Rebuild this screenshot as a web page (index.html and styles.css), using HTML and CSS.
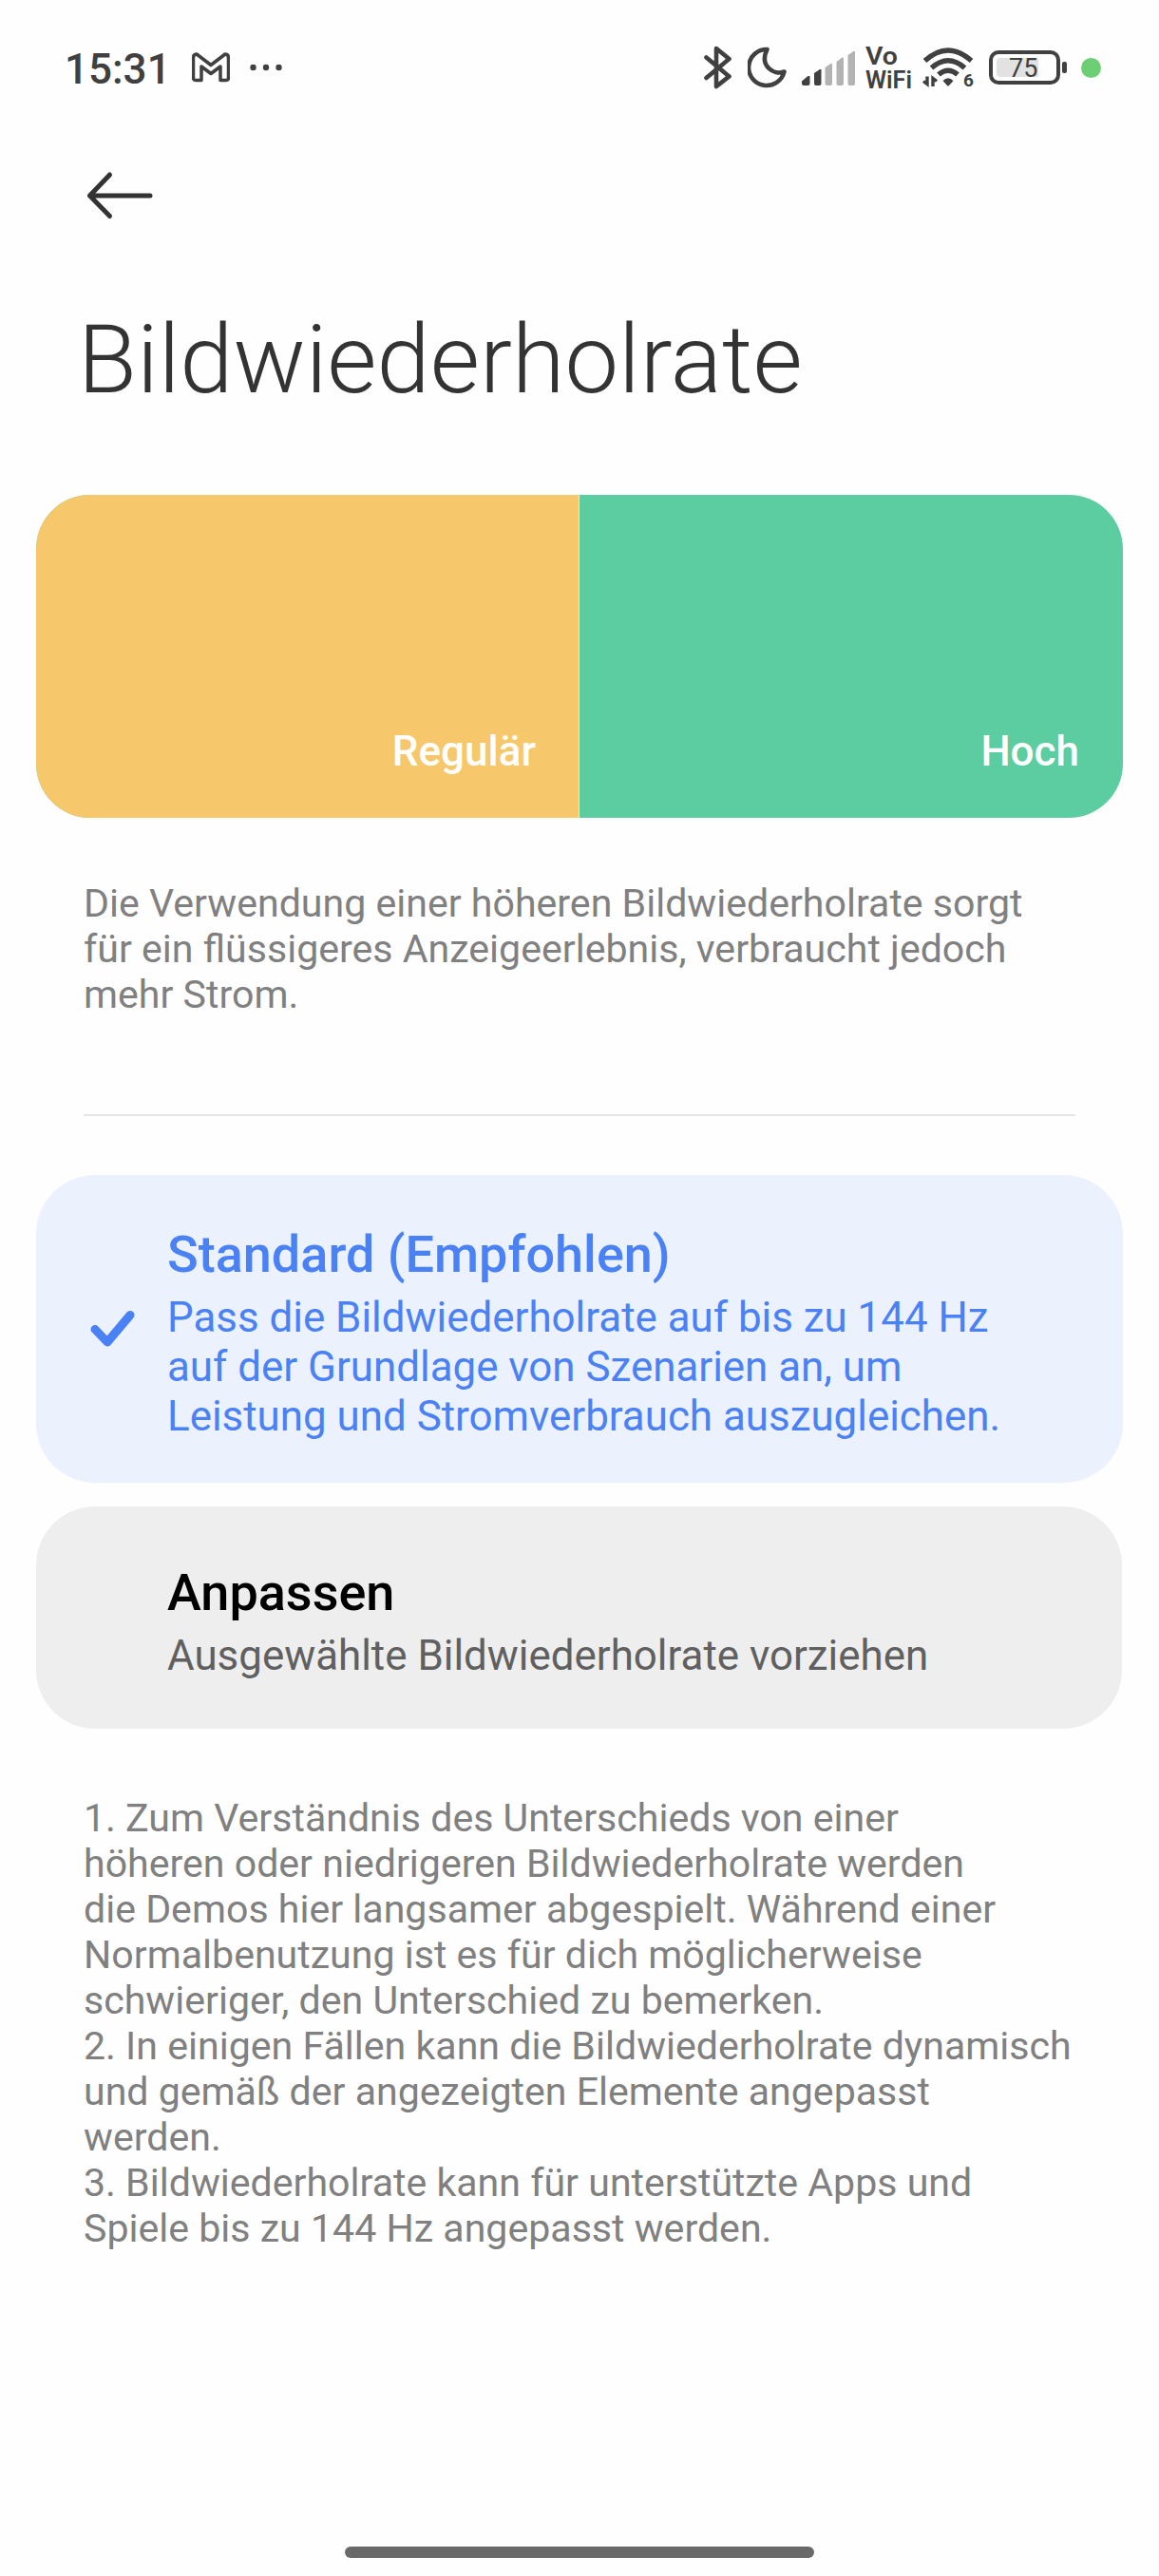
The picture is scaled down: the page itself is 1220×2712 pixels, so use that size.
FILE: index.html
```html
<!DOCTYPE html>
<html lang="de">
<head>
<meta charset="utf-8">
<title>Bildwiederholrate</title>
<link rel="stylesheet" href="styles.css">
</head>
<body>

<div class="statusbar">
  <span class="time">15:31</span>
  <svg class="ic-mail" width="40" height="32" viewBox="0 0 40 32">
    <path d="M5 2 L20 13.500 L35 2 Q38.500 2 38.500 6 V27 Q38.500 29.500 36 29.500 H30 V15 L20 22.500 L10 15 V29.500 H4 Q1.500 29.500 1.500 27 V6 Q1.500 2 5 2 Z"/>
  </svg>
  <svg class="ic-dots" width="34" height="8" viewBox="0 0 34 8">
    <circle cx="3.500" cy="4" r="3.200"/><circle cx="17" cy="4" r="3.200"/><circle cx="30.500" cy="4" r="3.200"/>
  </svg>

  <svg class="ic-bt" width="30" height="46" viewBox="0 0 30 46">
    <path d="M2.500 12.500 L26.500 32.500 L13 43 V3 L26.500 14 L2.500 34"/>
  </svg>
  <svg class="ic-moon" width="42" height="44" viewBox="0 0 42 44">
    <path d="M20.500 3 A19 19 0 1 0 38.500 26.500 C27 30.500 12 20 20.500 3 Z"/>
  </svg>
  <svg class="ic-signal" width="57" height="38" viewBox="0 0 57 38">
    <path class="on" d="M0 35 V32.500 L6.500 27 H8.500 V35 Q8.500 37 6.500 37 H2 Q0 37 0 35 Z"/>
    <path class="on" d="M13 35 V24 L19 20 H20.500 V35 Q20.500 37 18.500 37 H15 Q13 37 13 35 Z"/>
    <path class="off" d="M24.500 35 V18 L30.500 14 H32 V35 Q32 37 30 37 H26.500 Q24.500 37 24.500 35 Z"/>
    <path class="off" d="M36.500 35 V12 L42.500 7.500 H44 V35 Q44 37 42 37 H38.500 Q36.500 37 36.500 35 Z"/>
    <path class="off" d="M48.500 35 V5 L54.500 1 H56 V35 Q56 37 54 37 H50.500 Q48.500 37 48.500 35 Z"/>
  </svg>
  <svg class="ic-vowifi" width="50" height="60" viewBox="0 0 50 60">
    <text x="0" y="27" textLength="34" lengthAdjust="spacingAndGlyphs">Vo</text>
    <text x="0" y="52" textLength="49" lengthAdjust="spacingAndGlyphs">WiFi</text>
  </svg>
  <svg class="ic-wifi" width="58" height="52" viewBox="0 -4 58 52">
    <path class="arc" d="M2.500 15 Q27 -7 51.500 15"/>
    <path class="arc" d="M9.500 22.500 Q27 7 44.500 22.500"/>
    <path class="arc" d="M17 29.500 Q27 21 37 29.500"/>
    <path class="fill" d="M21.500 36 Q27 30.500 32.500 36 L28 41 Q27 42 26 41 Z"/>
    <path class="arr" d="M1 36.500 L5 39.500 V31.500 M11 42 V33.500 L15 36.500"/>
    <text x="43" y="42">6</text>
  </svg>
  <div class="battery">
    <span class="level">75</span>
  </div>
  <span class="nub"></span>
  <span class="privacy-dot"></span>
</div>

<div class="actionbar">
  <svg width="72" height="52" viewBox="0 0 72 52">
    <path d="M25.500 4 L4.500 26 L25.500 47.500 M4.500 26 H68"/>
  </svg>
</div>

<h1>Bildwiederholrate</h1>

<div class="demo">
  <div class="demo-item regular">Regulär</div>
  <div class="demo-item high">Hoch</div>
</div>

<p class="hint intro">Die Verwendung einer höheren Bildwiederholrate sorgt<br>
für ein flüssigeres Anzeigeerlebnis, verbraucht jedoch<br>
mehr Strom.</p>

<hr>

<div class="option selected">
  <svg class="check" width="48" height="40" viewBox="0 0 48 40">
    <path d="M5 20.500 L18 34 L42 5.500"/>
  </svg>
  <div class="option-text">
    <h2>Standard (Empfohlen)</h2>
    <p>Pass die Bildwiederholrate auf bis zu 144 Hz<br>
    auf der Grundlage von Szenarien an, um<br>
    Leistung und Stromverbrauch auszugleichen.</p>
  </div>
</div>

<div class="option custom">
  <div class="option-text">
    <h2>Anpassen</h2>
    <p>Ausgewählte Bildwiederholrate vorziehen</p>
  </div>
</div>

<p class="hint notes">1. Zum Verständnis des Unterschieds von einer<br>
höheren oder niedrigeren Bildwiederholrate werden<br>
die Demos hier langsamer abgespielt. Während einer<br>
Normalbenutzung ist es für dich möglicherweise<br>
schwieriger, den Unterschied zu bemerken.<br>
2. In einigen Fällen kann die Bildwiederholrate dynamisch<br>
und gemäß der angezeigten Elemente angepasst<br>
werden.<br>
3. Bildwiederholrate kann für unterstützte Apps und<br>
Spiele bis zu 144 Hz angepasst werden.</p>

<div class="home-indicator"></div>

</body>
</html>
```

FILE: styles.css
```css
* {
  box-sizing: border-box;
}

body {
  margin: 0;
  height: 2712px;
  display: flex;
  flex-direction: column;
  background: #fefefe;
  font-family: Roboto, sans-serif;
}

h1, h2, p {
  margin: 0;
}

svg {
  flex: none;
  fill: none;
}

/* status bar */
.statusbar {
  display: flex;
  align-items: center;
  height: 142px;
  padding-left: 68px;
  color: #404040;
}

.time {
  width: 134px;
  font-size: 44px;
  font-weight: 500;
  line-height: 52px;
  margin-top: 3px;
}

.ic-mail {
  stroke: #404040;
  stroke-width: 3.5;
  stroke-linejoin: round;
}

.ic-dots {
  margin-left: 21px;
  margin-right: auto;
  fill: #404040;
}

.ic-bt, .ic-moon {
  stroke: #404040;
  stroke-width: 4.6;
  stroke-linecap: round;
  stroke-linejoin: round;
}

.ic-moon {
  margin-left: 16px;
}

.ic-signal {
  margin: 1px 10px 0 15px;
}

.on {
  fill: #404040;
}

.off {
  fill: #b3b3b3;
}

.ic-vowifi {
  overflow: visible;
}

.ic-vowifi text {
  fill: #404040;
  font-size: 26px;
  font-weight: 600;
}

.ic-wifi {
  margin: 0 12px 0 10px;
  overflow: visible;
}

.arc {
  stroke: #404040;
  stroke-width: 5.5;
}

.fill {
  fill: #404040;
}

.arr {
  stroke: #404040;
  stroke-width: 3.4;
}

.ic-wifi text {
  fill: #404040;
  font-size: 19px;
  font-weight: 700;
}

.battery {
  width: 75px;
  height: 36px;
  padding: 4px;
  border: 4px solid #404040;
  border-radius: 10px;
}

.level {
  display: block;
  width: 44px;
  height: 20px;
  padding-left: 13px;
  border-radius: 4px 0 0 4px;
  background: #e2e2e2;
  font-size: 27px;
  font-weight: 400;
  line-height: 22px;
}

.nub {
  width: 5px;
  height: 12px;
  margin-left: 2px;
  border-radius: 2px;
  background: #404040;
}

.privacy-dot {
  width: 21px;
  height: 21px;
  margin: 0 61px 0 15px;
  border-radius: 50%;
  background: #6ccf74;
}

/* header */
.actionbar {
  height: 128px;
  padding: 38px 0 0 90px;
}

.actionbar path {
  stroke: #333;
  stroke-width: 5;
  stroke-linecap: round;
  stroke-linejoin: round;
}

h1 {
  height: 251px;
  padding: 50px 0 0 82px;
  color: #333;
  font-size: 101px;
  font-weight: 300;
  line-height: 118px;
}

/* demo panels */
.demo {
  flex: none;
  display: flex;
  width: 1144px;
  height: 340px;
  margin-left: 38px;
  overflow: hidden;
  border-radius: 57px;
  background: #5ccca1;
}

.demo-item {
  display: flex;
  width: 50%;
  align-items: flex-end;
  justify-content: flex-end;
  padding: 0 46px 44px 0;
  color: #fff;
  font-size: 44px;
  font-weight: 500;
  line-height: 52px;
}

.regular {
  padding-right: 45px;
  border-right: 1px solid #e3eed6;
  background: #f6c86b;
}

.hint {
  margin-left: 88px;
  color: #808080;
  font-size: 41.1px;
  line-height: 48px;
  white-space: nowrap;
}

.intro {
  margin-top: 66px;
}

hr {
  width: 1044px;
  height: 2px;
  margin: 102px 0 62px 88px;
  border: 0;
  background: #e6e6e6;
}

/* mode options */
.option {
  flex: none;
  display: flex;
  align-items: center;
  width: 1144px;
  margin-left: 38px;
  border-radius: 62px;
  white-space: nowrap;
}

.option-text {
  margin-top: 8px;
}

.option h2 {
  margin-bottom: 9px;
  font-size: 54px;
  font-weight: 500;
  line-height: 62px;
}

.option p {
  font-size: 43.9px;
  line-height: 52px;
}

.selected {
  height: 324px;
  margin-bottom: 25px;
  background: #ebf1fd;
  color: #4a81f5;
}

.check {
  margin: 0 33px 0 57px;
  stroke: #4a81f5;
  stroke-width: 9;
  stroke-linecap: round;
  stroke-linejoin: round;
}

.custom {
  width: 1143px;
  height: 234px;
  padding-left: 138px;
  background: #eee;
}

.custom h2 {
  color: #000;
}

.custom p {
  color: #606060;
}

.notes {
  margin-top: 70px;
}

.home-indicator {
  width: 494px;
  height: 12px;
  margin: auto auto 19px 363px;
  border-radius: 6px;
  background: #696969;
}
```
